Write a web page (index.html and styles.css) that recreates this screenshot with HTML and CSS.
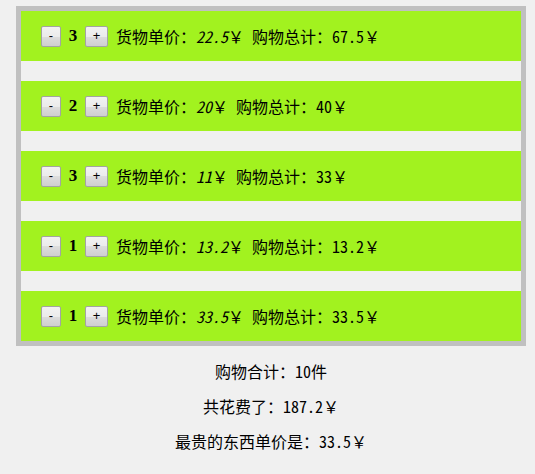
FILE: index.html
```html
<!DOCTYPE html>
<html lang="zh">
<head>
<meta charset="utf-8">
<link rel="stylesheet" href="styles.css">
</head>
<body>
<div class="cart">
  <div class="row"><button class="btn minus">-</button><span class="qty">3</span><button class="btn plus">+</button><span class="info">货物单价：<em>22.5<span class="yen">￥</span></em> 购物总计：67.5<span class="yen">￥</span></span></div>
  <div class="row"><button class="btn minus">-</button><span class="qty">2</span><button class="btn plus">+</button><span class="info">货物单价：<em>20<span class="yen">￥</span></em> 购物总计：40<span class="yen">￥</span></span></div>
  <div class="row"><button class="btn minus">-</button><span class="qty">3</span><button class="btn plus">+</button><span class="info">货物单价：<em>11<span class="yen">￥</span></em> 购物总计：33<span class="yen">￥</span></span></div>
  <div class="row"><button class="btn minus">-</button><span class="qty">1</span><button class="btn plus">+</button><span class="info">货物单价：<em>13.2<span class="yen">￥</span></em> 购物总计：13.2<span class="yen">￥</span></span></div>
  <div class="row"><button class="btn minus">-</button><span class="qty">1</span><button class="btn plus">+</button><span class="info">货物单价：<em>33.5<span class="yen">￥</span></em> 购物总计：33.5<span class="yen">￥</span></span></div>
</div>
<div class="summary">
  <p>购物合计：10件</p>
  <p>共花费了：187.2<span class="yen">￥</span></p>
  <p>最贵的东西单价是：33.5<span class="yen">￥</span></p>
</div>
</body>
</html>
```
FILE: styles.css
```css
html, body {
  margin: 0;
  background: #f0f0f0;
}
body {
  padding: 6px 0 0 16px;
  font-family: "Noto Sans CJK SC", sans-serif;
  font-size: 16px;
  color: #000;
  font-feature-settings: "hwid" 1;
  text-spacing-trim: space-all;
}
.cart {
  width: 500px;
  border: 5px solid #c0c0c0;
  display: flex;
  flex-direction: column;
  gap: 20px;
}
.row {
  height: 50px;
  background: #a2f21f;
  display: flex;
  align-items: center;
  padding-left: 20px;
}
.btn {
  box-sizing: border-box;
  height: 21px;
  padding: 0;
  margin: 0;
  border: 1px solid #a3a3a3;
  border-radius: 2px;
  background: linear-gradient(#f2f2f2 0%, #ebebeb 50%, #dddddd 50%, #cfcfcf 100%);
  font-family: "Liberation Sans", sans-serif;
  font-size: 13px;
  line-height: 18px;
  color: #000;
  font-feature-settings: normal;
}
.minus { width: 20px; }
.plus { width: 23px; }
.qty {
  font-family: "Liberation Serif", serif;
  font-weight: bold;
  font-size: 17px;
  width: 24px;
  text-align: center;
  font-feature-settings: normal;
}
.info {
  margin-left: 8px;
  line-height: 20px;
  white-space: pre;
}
.info em {
  font-style: italic;
}
.yen {
  display: inline-block;
  width: 16px;
  text-align: left;
  font-style: normal;
  font-feature-settings: normal;
}
.summary {
  width: 510px;
  text-align: center;
}
.summary p {
  margin: 16px 0 0;
  line-height: 19px;
}
```
